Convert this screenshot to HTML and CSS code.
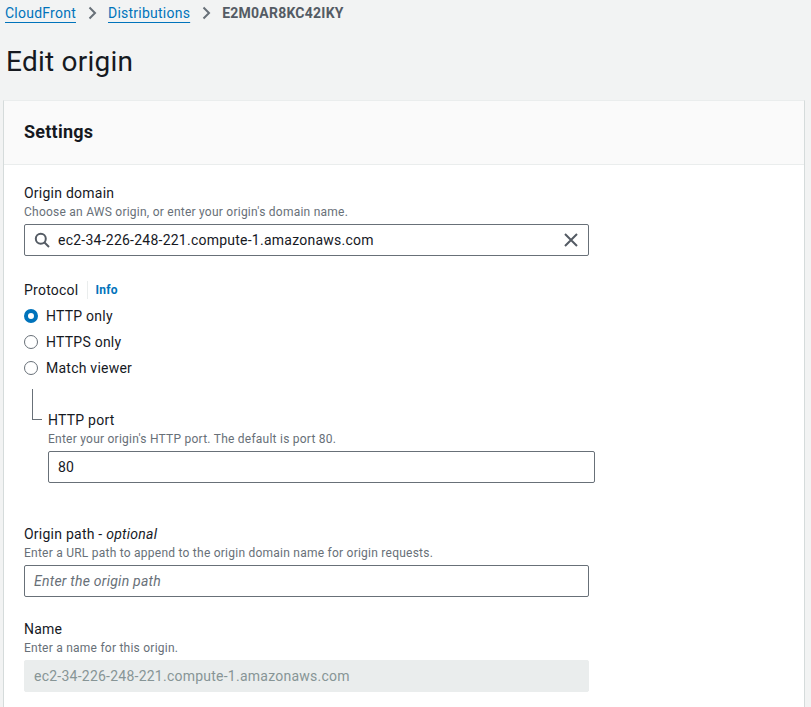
FILE: index.html
```html
<!DOCTYPE html>
<html lang="en">
<head>
<meta charset="utf-8">
<title>Edit origin</title>
<link rel="stylesheet" href="styles.css">
</head>
<body>
<div class="page">
  <nav class="crumbs">
    <a class="crumb-link" href="#">CloudFront</a>
    <svg class="chev" width="16" height="16" viewBox="0 0 16 16"><path d="M5.5 2.5 11 8l-5.5 5.5" fill="none" stroke="#687078" stroke-width="2"/></svg>
    <a class="crumb-link" href="#">Distributions</a>
    <svg class="chev" width="16" height="16" viewBox="0 0 16 16"><path d="M5.5 2.5 11 8l-5.5 5.5" fill="none" stroke="#687078" stroke-width="2"/></svg>
    <span class="crumb-current">E2M0AR8KC42IKY</span>
  </nav>
  <h1 class="title">Edit origin</h1>

  <section class="panel">
    <header class="panel-head"><h2 class="panel-title">Settings</h2></header>
    <div class="panel-body">

      <div class="field">
        <div class="label">Origin domain</div>
        <div class="desc">Choose an AWS origin, or enter your origin's domain name.</div>
        <div class="input input-search">
          <svg class="ico-search" width="16" height="16" viewBox="0 0 16 16"><circle cx="6.8" cy="6.8" r="5" fill="none" stroke="#545b64" stroke-width="2"/><path d="M10.5 10.5 15 15" stroke="#545b64" stroke-width="2"/></svg>
          <span class="input-text">ec2-34-226-248-221.compute-1.amazonaws.com</span>
          <svg class="ico-clear" width="16" height="16" viewBox="0 0 16 16"><path d="M2 2l12 12M14 2 2 14" stroke="#545b64" stroke-width="2"/></svg>
        </div>
      </div>

      <div class="field field-protocol">
        <div class="label label-info">Protocol <span class="divider"></span><a class="info" href="#">Info</a></div>
        <div class="radios">
          <div class="radio-row"><span class="radio radio-on"></span>HTTP only</div>
          <div class="radio-row"><span class="radio"></span>HTTPS only</div>
          <div class="radio-row"><span class="radio"></span>Match viewer</div>
        </div>
        <div class="sub">
          <div class="connector"></div>
          <div class="sub-body">
            <div class="label">HTTP port</div>
            <div class="desc">Enter your origin's HTTP port. The default is port 80.</div>
            <div class="input input-port"><span class="input-text">80</span></div>
          </div>
        </div>
      </div>

      <div class="field field-path">
        <div class="label">Origin path - <i>optional</i></div>
        <div class="desc">Enter a URL path to append to the origin domain name for origin requests.</div>
        <div class="input"><span class="placeholder">Enter the origin path</span></div>
      </div>

      <div class="field field-name">
        <div class="label">Name</div>
        <div class="desc">Enter a name for this origin.</div>
        <div class="input input-disabled"><span class="input-text">ec2-34-226-248-221.compute-1.amazonaws.com</span></div>
      </div>

    </div>
  </section>
</div>
</body>
</html>
```

FILE: styles.css
```css
* { box-sizing: border-box; }
html, body { margin: 0; padding: 0; }
body {
  background: #f2f3f3;
  font-family: Roboto, "Liberation Sans", sans-serif;
  letter-spacing: 0.015em;
  color: #16191f;
  width: 811px;
  height: 707px;
  overflow: hidden;
}
.page { padding: 0 0 0 3px; width: 805px; }

.crumbs {
  display: flex;
  align-items: center;
  height: 26px;
  padding-left: 2px;
  font-size: 14px;
  line-height: 20px;
}
.crumb-link {
  color: #0073bb;
  text-decoration: underline;
  text-underline-offset: 4px;
}
.chev { margin: 0 8px 0 8px; }
.crumb-current { color: #545b64; font-weight: 700; }

.title {
  margin: 0;
  padding: 18px 0 0 3px;
  font-size: 28px;
  line-height: 36px;
  font-weight: 400;
  height: 74px;
}

.panel {
  background: #fff;
  border: 1px solid #d5dbdb;
  border-top-color: #eaeded;
  width: 802px;
}
.panel-head {
  background: #fafafa;
  border-bottom: 1px solid #eaeded;
  height: 64px;
  padding: 20px 20px 0 20px;
}
.panel-title { margin: 0; font-size: 18px; line-height: 22px; font-weight: 700; }

.panel-body { padding: 17px 20px 20px 20px; }

.field { display: flex; flex-direction: column; }
.label { font-size: 14px; line-height: 22px; }
.desc { font-size: 12px; line-height: 16px; color: #687078; margin-bottom: 4px; }

.input {
  height: 32px;
  border: 1px solid #687078;
  border-radius: 2px;
  display: flex;
  align-items: center;
  padding: 0 9px;
  font-size: 14px;
  width: 565px;
}
.input-text { flex: 1; }
.ico-search { margin: 0 8px 0 0; }
.ico-clear { margin-right: 0; }
.input-search { padding-left: 9px; }
.placeholder { color: #687078; font-style: italic; }
.input-disabled { background: #eaeded; border-color: #eaeded; color: #879596; }

.field-protocol { margin-top: 23px; }
.label-info { display: flex; align-items: center; }
.divider { display: inline-block; width: 1px; height: 18px; background: #eaeded; margin: 0 8px 0 8px; }
.info { color: #0073bb; font-weight: 700; font-size: 12px; text-decoration: none; }

.radios { display: flex; flex-direction: column; gap: 4px; margin-top: 4px; }
.radio-row { display: flex; align-items: center; font-size: 14px; line-height: 22px; }
.radio {
  width: 14px; height: 14px;
  border-radius: 50%;
  border: 1.5px solid #687078;
  margin-right: 8px;
}
.radio-on { border: 4px solid #0073bb; background: #fff; }

.sub { display: flex; margin-top: 10px; }
.connector {
  width: 10px;
  height: 31px;
  margin-left: 8px;
  border-left: 1px solid #687078;
  border-bottom: 1px solid #687078;
}
.sub-body { padding-top: 20px; margin-left: 6px; }
.input-port { width: 547px; }

.field-path { margin-top: 40px; }
.field-name { margin-top: 21px; }
```
